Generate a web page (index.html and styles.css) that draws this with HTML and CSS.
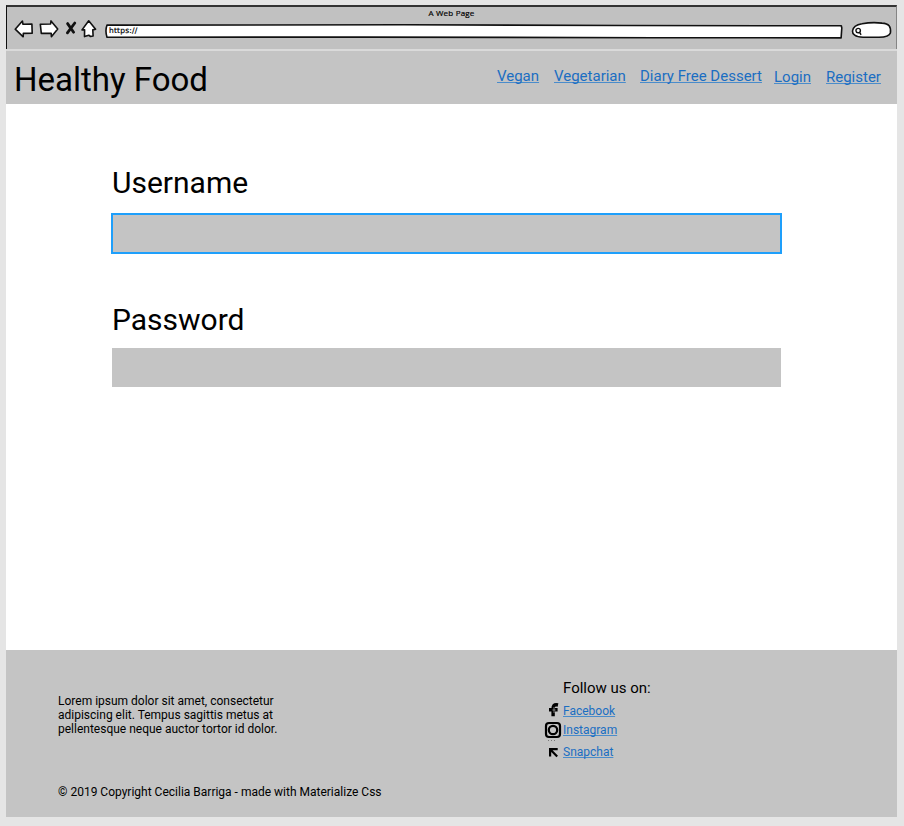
FILE: index.html
```html
<!DOCTYPE html>
<html lang="en">
<head>
<meta charset="utf-8">
<title>Healthy Food</title>
<link rel="stylesheet" href="styles.css">
</head>
<body>
<div class="page">
  <div class="browser">
    <div class="browser-title"><span>A Web Page</span></div>
    <div class="toolbar">
      <svg class="tool back" width="20" height="20" viewBox="0 0 20 20"><path d="M1.2 10.2 8.4 2 9 5.3 17.9 5 18.2 14.3 9.3 14.4 9.2 17.8Z"/></svg>
      <svg class="tool forward" width="20" height="20" viewBox="0 0 20 20"><path d="M18.7 10 12 1.9 11.6 5 1.3 5.2 2.3 14.4 12.2 14.3 12.4 17.7Z"/></svg>
      <svg class="tool stop" width="12" height="20" viewBox="0 0 12 20"><path d="M2.6 4.6 8.6 13.2M9.8 4 2.4 13.8"/></svg>
      <svg class="tool home" width="16" height="20" viewBox="0 0 16 20"><path d="M7.7 1.8 14.6 10.2 11.8 10.9 12.1 17 9.5 17.5 7.8 16.2 3.5 17.6 3.6 10.8 1 10.9Z"/></svg>
      <div class="address">
        <svg width="740" height="18" viewBox="0 0 740 18"><path d="M3 3.1 300 2.8 520 3.5 737.3 3.8 737.8 6 737.1 15.9 550 15.7 260 15.1 3 15.2Q.9 9 3 3.1Z"/></svg>
        <span>https://</span>
      </div>
      <svg class="search" width="41" height="20" viewBox="0 0 41 20"><path d="M11 4.8Q21 2.8 31 4.1C38 4.6 40.2 7.5 39.4 14Q38 18 28 18.3H12C4 18.1 1.3 15 1.5 12Q2.2 6.2 11 4.8Z"/><path class="lens" d="M7 9.4C10 9.2 10.2 13.5 7.5 13.8 4.4 14 4 9.9 7 9.4ZM8.6 13.2 9.8 15.4"/></svg>
    </div>
  </div>
  <header class="header">
    <h1>Healthy Food</h1>
    <nav class="nav">
      <a>Vegan</a><a>Vegetarian</a><a>Diary Free Dessert</a><a class="account">Login</a><a class="account">Register</a>
    </nav>
  </header>
  <main class="form">
    <div class="label">Username</div>
    <div class="field focused"></div>
    <div class="label">Password</div>
    <div class="field"></div>
  </main>
  <footer class="footer">
    <div class="about">
      <p>Lorem ipsum dolor sit amet, consectetur<br>adipiscing elit. Tempus sagittis metus at<br>pellentesque neque auctor tortor id dolor.</p>
      <p class="copyright">© 2019 Copyright Cecilia Barriga - made with Materialize Css</p>
    </div>
    <div class="social">
      <div class="social-title">Follow us on:</div>
      <div class="row facebook"><svg width="18" height="18" viewBox="0 0 18 18"><path class="fb" d="M14 3C9.9 2.1 9 4 9.1 7V14.2M5 7.8H13.6"/><path class="shine" d="M10 5V11M8.4 8H11.6"/></svg><a>Facebook</a></div>
      <div class="row instagram"><svg width="18" height="18" viewBox="0 0 18 18"><rect x="2" y="2" width="14" height="14" rx="3"/><circle cx="9" cy="9" r="4.2"/><path class="dots" d="M4 19.5h1M7 19.5h1M10 19.5h1"/></svg><a>Instagram</a></div>
      <div class="row snapchat"><svg width="18" height="18" viewBox="0 0 18 18"><path d="M6.1 13.6V6.2H13.7M6.8 6.9 13.2 13.4"/></svg><a>Snapchat</a></div>
    </div>
  </footer>
</div>
</body>
</html>
```
FILE: styles.css
```css
* { box-sizing: border-box; }
body {
  margin: 0;
  height: 826px;
  padding: 5px 7px 9px 6px;
  background: #e5e5e5;
  font-family: Roboto, sans-serif;
  color: #000;
}
h1, p { margin: 0; font-weight: 400; }
.page { width: 891px; }

.browser {
  height: 44px;
  background: #c1c1c1;
  border-top: 2px solid #333;
  border-left: 1px solid #111;
  border-right: 1px solid #858585;
}
.browser-title {
  height: 12px;
  text-align: center;
  font: 8px/12px "Open Sans", sans-serif;
  letter-spacing: .2px;
}
.browser-title span { -webkit-text-stroke: .2px #000; }
.toolbar { display: flex; height: 20px; padding-left: 7px; }
.toolbar svg { fill: #fff; stroke: #111; stroke-width: 1.6; stroke-linejoin: round; stroke-linecap: round; }
.tool { flex: none; }
.forward { margin-left: 4.5px; }
.stop { margin-left: 6.5px; }
.toolbar .stop { stroke-width: 2.8; }
.home { margin-left: 4px; }
.address { display: grid; margin: 3px 0 0 7px; width: 740px; height: 18px; flex: none; }
.address > * { grid-area: 1 / 1; }
.address span { padding-left: 5px; font: 7.5px/18px "DejaVu Sans", sans-serif; letter-spacing: .2px; z-index: 1; -webkit-text-stroke: .2px #000; }
.search { margin-left: 7px; flex: none; }
.toolbar .lens { fill: none; stroke-width: 1.4; }

.header {
  height: 55px;
  border-top: 2px solid #dadada;
  background: #c4c4c4;
  display: flex;
  justify-content: space-between;
  padding: 0 14px 0 8px;
}
.header h1 { font-size: 33px; line-height: 39px; padding-top: 9px; }
.nav {
  display: grid;
  grid-template-columns: 57px 86px 134px 52px 57px;
  padding-top: 16px;
  font-size: 15px;
  line-height: 18px;
  white-space: nowrap;
}
.nav a, .row a { color: #1b6ec2; text-decoration: underline; text-decoration-skip-ink: none; text-decoration-color: #4a8ccb; }
.account { padding-top: 1px; }

.form { height: 546px; background: #fff; padding: 61px 0 0 106px; }
.label { font-size: 30px; line-height: 36px; }
.field { width: 669px; height: 39px; background: #c4c4c4; margin-top: 10px; }
.focused { width: 671px; height: 41px; margin: 12px 0 48px -1px; border: 2px solid #1e9ffb; }

.footer {
  height: 167px;
  background: #c4c4c4;
  display: grid;
  grid-template-columns: 486px 1fr;
  padding-left: 52px;
  font-size: 12px;
  line-height: 14px;
}
.about { padding-top: 44px; }
.copyright { margin-top: 49px; }
.social { padding-top: 29px; }
.social-title { padding-left: 19px; font-size: 15px; line-height: 18px; }
.row { display: flex; align-items: center; height: 18px; gap: 1px; }
.row svg { fill: none; stroke: #000; stroke-width: 2.2; overflow: visible; }
.facebook { margin-top: 5px; }
.instagram { margin-top: 1px; }
.snapchat { margin-top: 4px; }
.row .fb { stroke-width: 3.4; }
.row .shine { stroke: #aaa; stroke-width: .7; }
.row .dots { stroke: #777; stroke-width: 1; }
```
